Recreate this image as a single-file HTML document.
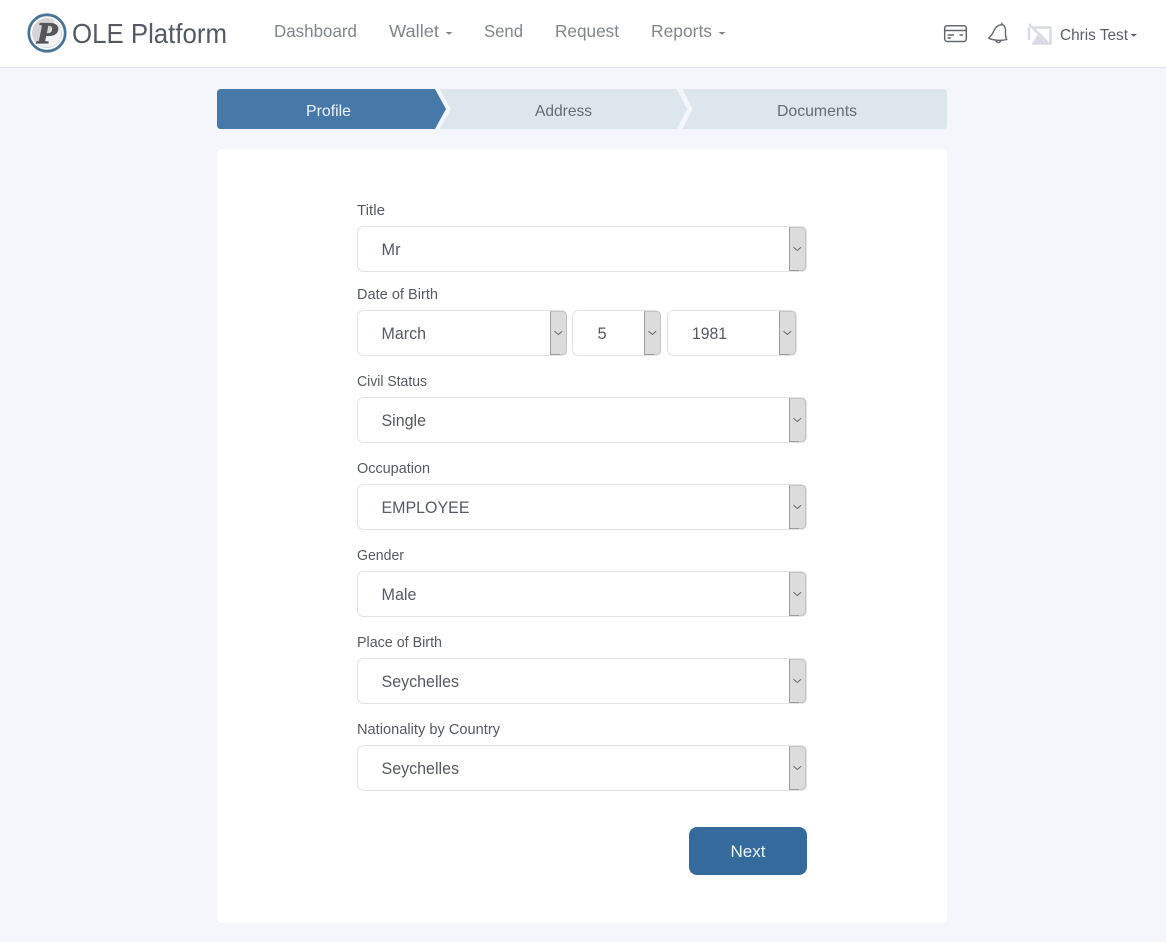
<!DOCTYPE html>
<html><head><meta charset="utf-8"><title>OLE Platform</title>
<style>
html,body{margin:0;padding:0;background:#f4f6fb;width:1166px;height:942px;overflow:hidden}
svg{display:block}
text{font-family:"Liberation Sans",sans-serif}
.nav{font-size:17.5px;fill:#80858b}
.lab{font-size:14.5px;fill:#555a60}
.val{font-size:16.5px;fill:#555a60}
.step{font-size:16px;fill:#666c74}
</style></head><body>
<svg width="1166" height="942" viewBox="0 0 1166 942" xmlns="http://www.w3.org/2000/svg">
<defs>
<g id="btn"><path d="M0.5 0.5H12.5Q16.5 0.500 16.500 4.500V39.500Q16.500 43.500 12.500 43.500H0.500Z" fill="#dcdcdc" stroke="#c4c4c4"/><path d="M0.500 0.500V43.500H10" fill="none" stroke="#9c9c9c"/><path d="M4.500 20.200l3.800 3.300 3.800-3.300" fill="none" stroke="#666" stroke-width="1"/></g>
</defs>
<rect width="1166" height="942" fill="#f4f6fb"/>
<rect width="1166" height="67" fill="#fff"/><rect y="67" width="1166" height="1" fill="#e0e3ea"/>
<!-- logo -->
<circle cx="47" cy="33" r="18.200" fill="#fff" stroke="#4a7496" stroke-width="2.800"/>
<circle cx="47" cy="33" r="15" fill="#d4d4d4"/>
<path d="M37 44Q52 35 54 20Q61 25 61 33Q61 42 53 46Q44 49 37 44Z" fill="#f2f2f2"/>
<text x="36.500" y="43" style="font-family:'Liberation Serif',serif;font-weight:bold;font-style:italic;font-size:30px;fill:#55575a;stroke:#55575a;stroke-width:1.200" textLength="21" lengthAdjust="spacingAndGlyphs">P</text>
<text x="72" y="43" style="font-size:27.500px;fill:#555b63" textLength="155" lengthAdjust="spacingAndGlyphs">OLE Platform</text>
<!-- nav -->
<text class="nav" x="274" y="37" textLength="83" lengthAdjust="spacingAndGlyphs">Dashboard</text>
<text class="nav" x="389" y="37" textLength="50" lengthAdjust="spacingAndGlyphs">Wallet</text>
<path d="M445.500 32h7l-3.500 2.800z" fill="#80858b"/>
<text class="nav" x="484" y="37" textLength="39" lengthAdjust="spacingAndGlyphs">Send</text>
<text class="nav" x="555" y="37" textLength="64" lengthAdjust="spacingAndGlyphs">Request</text>
<text class="nav" x="651" y="37" textLength="61" lengthAdjust="spacingAndGlyphs">Reports</text>
<path d="M718.500 32h7l-3.500 2.800z" fill="#80858b"/>
<!-- card icon -->
<g fill="none" stroke="#63686e" stroke-width="1.500">
<rect x="944.700" y="25.700" width="21.600" height="15.800" rx="2.500"/>
<path d="M945 30.500H966"/><path d="M947.500 35H954M947.500 38H951M959.500 35H963"/>
</g>
<!-- bell -->
<g fill="none" stroke="#63686e" stroke-width="1.400" stroke-linejoin="round" stroke-linecap="round">
<path d="M1002 24.800C997.500 24.500 995 28 993.500 31.500C992.500 34 990.500 36.500 988.500 38C992 40.200 1001 41.200 1006.800 39.500C1005 36.500 1005.500 32.500 1005.500 30C1005.500 27 1004 24.800 1002 24.800Z"/>
<path d="M1002 24.500L1001.800 23.200"/><path d="M996 41.200Q998 43.800 1000.500 41.500"/>
</g>
<!-- broken image icon -->
<g fill="none" stroke="#d8dbe3" stroke-width="2.500">
<path d="M1034 27.500H1050.500V43.500H1032M1029 40V27"/><path d="M1029 24L1049 44"/>
</g>
<path d="M1033 43L1037.500 34.500L1046 43Z" fill="#d8dbe3"/>
<text x="1060" y="40" style="font-size:15.500px;fill:#5a5f66" textLength="68" lengthAdjust="spacingAndGlyphs">Chris Test</text>
<path d="M1130.500 34h6.500l-3.250 2.700z" fill="#5a5f66"/>
<!-- stepper -->
<path d="M221 89H435L446 109L435 129H221Q217 129 217 125V93Q217 89 221 89Z" fill="#4679a8"/>
<path d="M439.500 89H676.500L687.500 109L676.500 129H439.500L451 109Z" fill="#dde6ed"/>
<path d="M682.500 89H943Q947 89 947 93V125Q947 129 943 129H682.500L692.500 109Z" fill="#dde6ed"/>
<text x="306" y="116" style="font-size:16px;fill:#eef4fa" textLength="45" lengthAdjust="spacingAndGlyphs">Profile</text>
<text class="step" x="535" y="116" textLength="57" lengthAdjust="spacingAndGlyphs">Address</text>
<text class="step" x="777" y="116" textLength="80" lengthAdjust="spacingAndGlyphs">Documents</text>
<!-- card -->
<rect x="217" y="149" width="730" height="774" rx="6" fill="#fff"/>
<!-- form labels -->
<text class="lab" x="357" y="215" textLength="28" lengthAdjust="spacingAndGlyphs">Title</text>
<text class="lab" x="357" y="299" textLength="81" lengthAdjust="spacingAndGlyphs">Date of Birth</text>
<text class="lab" x="357" y="386" textLength="70" lengthAdjust="spacingAndGlyphs">Civil Status</text>
<text class="lab" x="357" y="473" textLength="73" lengthAdjust="spacingAndGlyphs">Occupation</text>
<text class="lab" x="357" y="560" textLength="47" lengthAdjust="spacingAndGlyphs">Gender</text>
<text class="lab" x="357" y="647" textLength="85" lengthAdjust="spacingAndGlyphs">Place of Birth</text>
<text class="lab" x="357" y="734" textLength="143" lengthAdjust="spacingAndGlyphs">Nationality by Country</text>
<!-- selects -->
<g fill="#fff" stroke="#e2e2e2">
<rect x="357.500" y="226.500" width="449" height="45" rx="6"/>
<rect x="357.500" y="310.500" width="209" height="45" rx="6"/>
<rect x="572.500" y="310.500" width="88" height="45" rx="6"/>
<rect x="667.500" y="310.500" width="129" height="45" rx="6"/>
<rect x="357.500" y="397.500" width="449" height="45" rx="6"/>
<rect x="357.500" y="484.500" width="449" height="45" rx="6"/>
<rect x="357.500" y="571.500" width="449" height="45" rx="6"/>
<rect x="357.500" y="658.500" width="449" height="45" rx="6"/>
<rect x="357.500" y="745.500" width="449" height="45" rx="6"/>
</g>
<use href="#btn" x="789" y="227"/>
<use href="#btn" x="550" y="311"/>
<use href="#btn" x="644" y="311"/>
<use href="#btn" x="779" y="311"/>
<use href="#btn" x="789" y="398"/>
<use href="#btn" x="789" y="485"/>
<use href="#btn" x="789" y="572"/>
<use href="#btn" x="789" y="659"/>
<use href="#btn" x="789" y="746"/>
<text class="val" x="381.500" y="255" textLength="19" lengthAdjust="spacingAndGlyphs">Mr</text>
<text class="val" x="381.500" y="339" textLength="44.500" lengthAdjust="spacingAndGlyphs">March</text>
<text class="val" x="597.500" y="339">5</text>
<text class="val" x="692" y="339" textLength="35" lengthAdjust="spacingAndGlyphs">1981</text>
<text class="val" x="381.500" y="426" textLength="44.500" lengthAdjust="spacingAndGlyphs">Single</text>
<text class="val" x="381.500" y="513" textLength="88" lengthAdjust="spacingAndGlyphs">EMPLOYEE</text>
<text class="val" x="381.500" y="600" textLength="35" lengthAdjust="spacingAndGlyphs">Male</text>
<text class="val" x="381.500" y="687" textLength="77.500" lengthAdjust="spacingAndGlyphs">Seychelles</text>
<text class="val" x="381.500" y="774" textLength="77.500" lengthAdjust="spacingAndGlyphs">Seychelles</text>
<!-- next -->
<rect x="689" y="827" width="118" height="48" rx="8" fill="#356a9c"/>
<text x="730.500" y="857" style="font-size:16.500px;fill:#eef5fb" textLength="35" lengthAdjust="spacingAndGlyphs">Next</text>
</svg>
</body></html>
